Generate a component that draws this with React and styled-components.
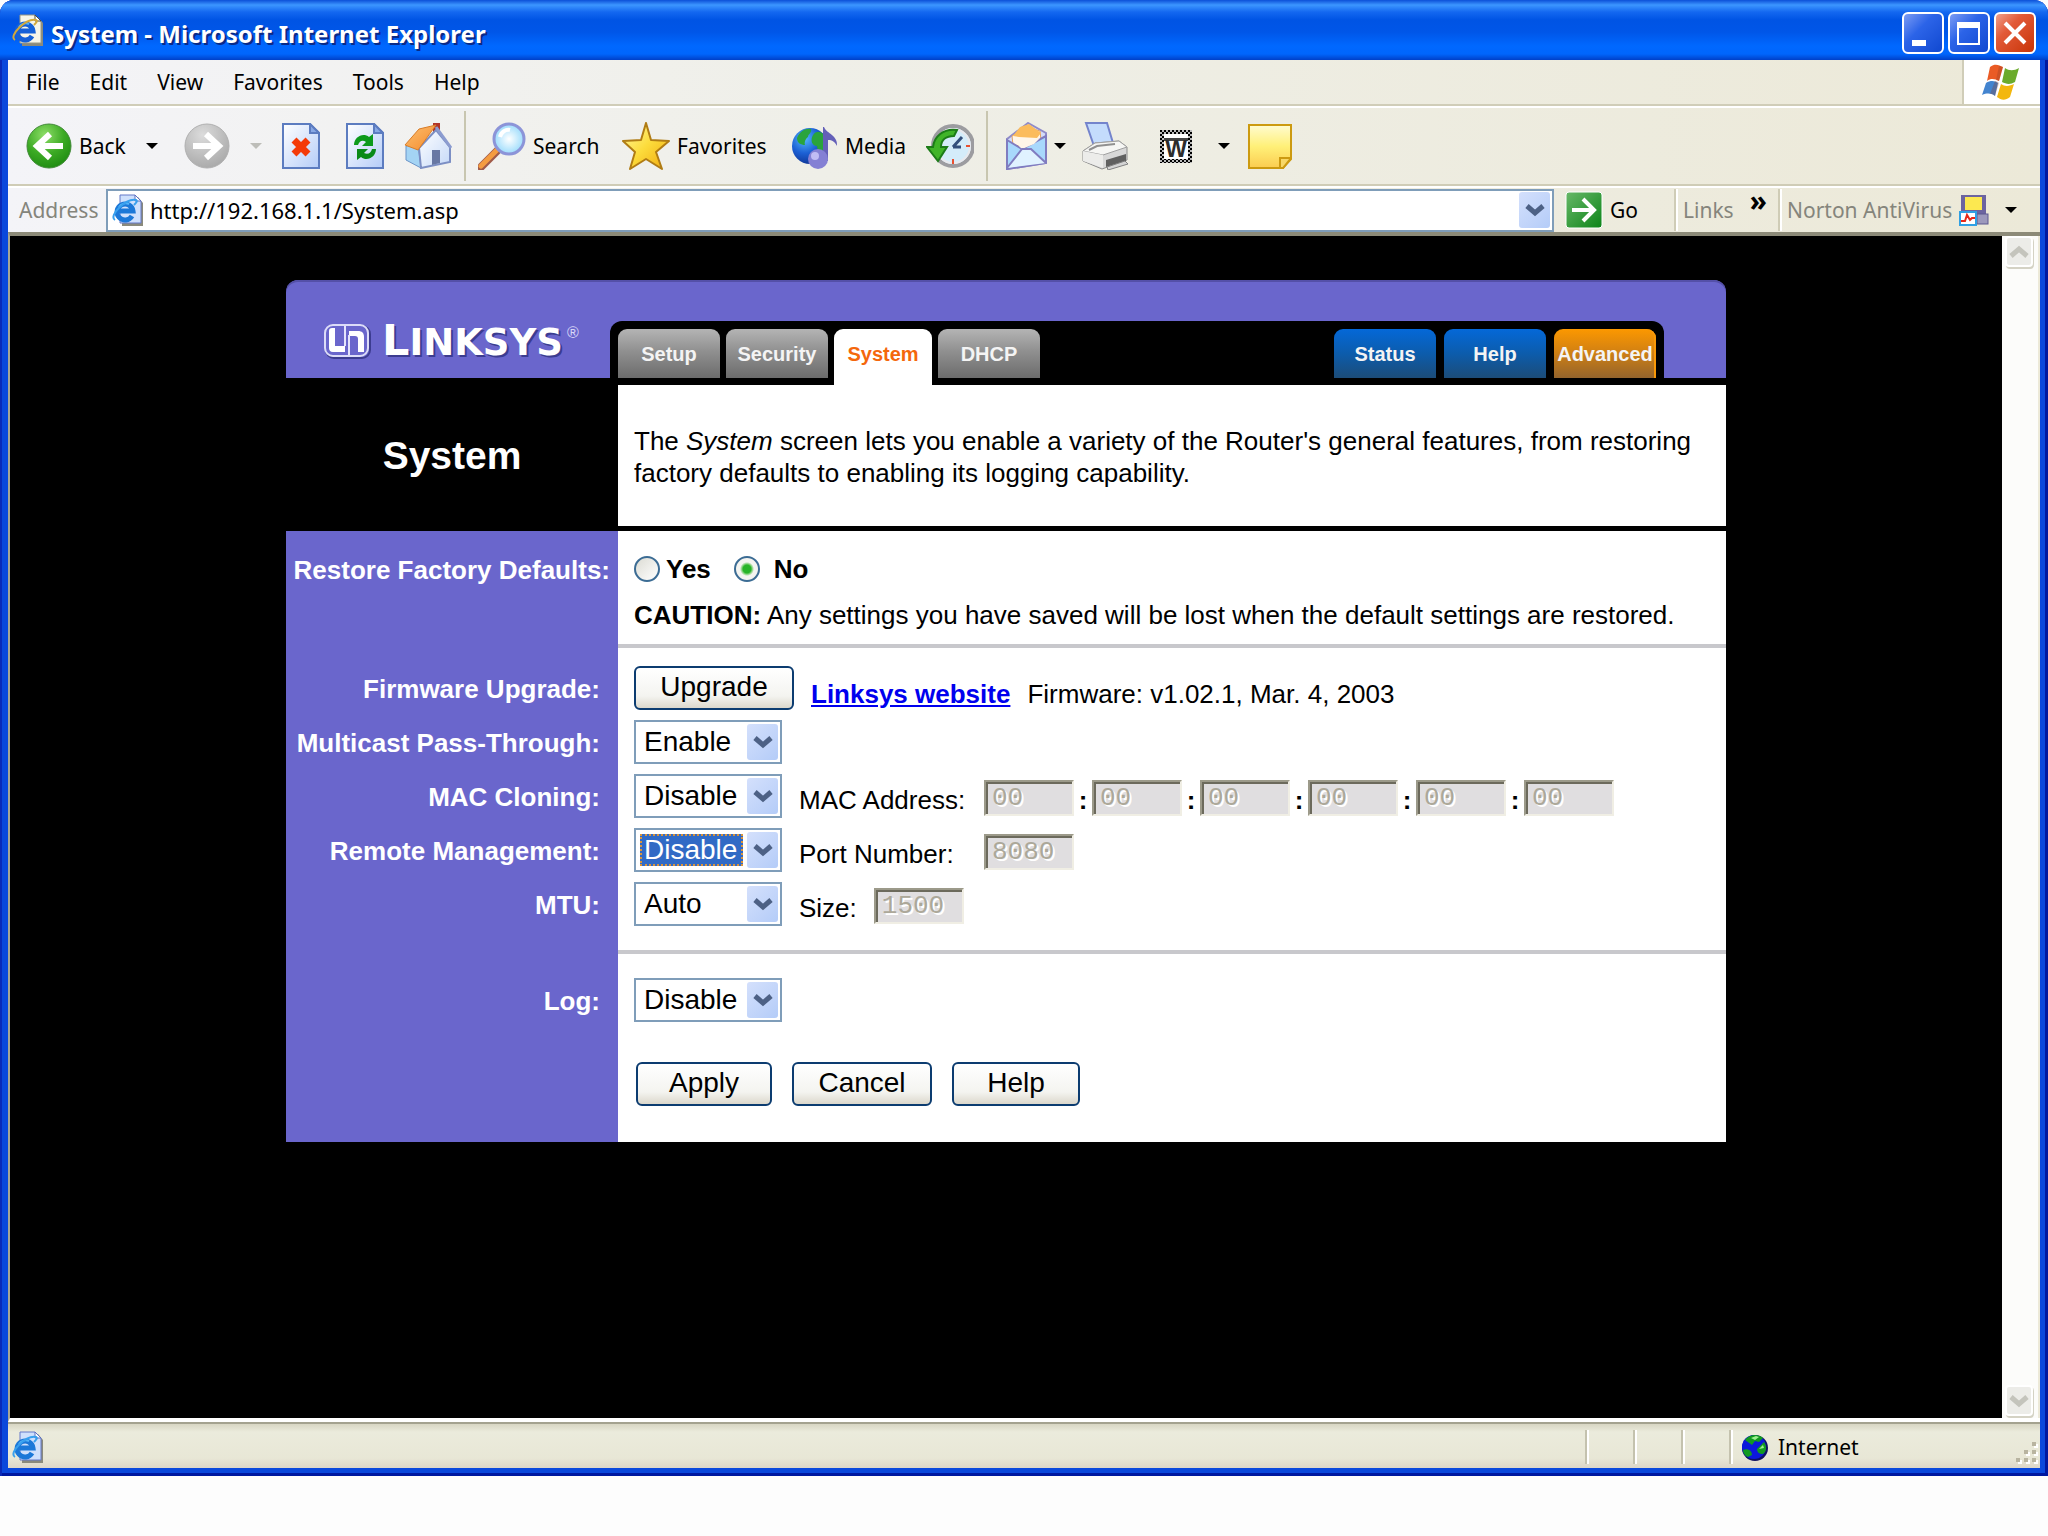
import React, { useState } from 'react'
import styled, { createGlobalStyle, css } from 'styled-components';

const uiFont = `"Noto Sans", "Open Sans", sans-serif`;
const pageFont = `"Liberation Sans", Arial, sans-serif`;

const App = () => {
  return (
    <Screen>
      <GlobalStyle />
      <Window>
        <TitleBar>
          <PageIcon size={32} />
          <Title>System - Microsoft Internet Explorer</Title>
          <WindowButtons />
        </TitleBar>
        <Chrome>
          <MenuBar />
          <ToolBar />
          <AddressBar />
        </Chrome>
        <Viewport>
          <Page>
            <RouterPanel />
          </Page>
          <ScrollBar>
            <ScrollButton aria-label="Scroll up"><Chevron up color="#c4c4bc" /></ScrollButton>
            <ScrollButton aria-label="Scroll down"><Chevron color="#c4c4bc" /></ScrollButton>
          </ScrollBar>
        </Viewport>
        <StatusBar>
          <PageIcon size={32} blue />
          <StatusCells>
            <StatusCell />
            <StatusCell />
            <StatusCell />
            <StatusZone>
              <ZoneIcon />
              Internet
              <Grip />
            </StatusZone>
          </StatusCells>
        </StatusBar>
      </Window>
    </Screen>
  )
}

export default App

const WindowButtons = () => (
  <WindowControls>
    <WindowButton aria-label="Minimize">
      <svg width="36" height="36" viewBox="0 0 36 36"><rect x="7" y="25" width="14" height="6" fill="#fff" /></svg>
    </WindowButton>
    <WindowButton aria-label="Maximize">
      <svg width="36" height="36" viewBox="0 0 36 36"><path d="M6 7h23v23H6z M8 13v15h19V13z" fill="#fff" fillRule="evenodd" /></svg>
    </WindowButton>
    <WindowButton $close aria-label="Close">
      <svg width="36" height="36" viewBox="0 0 36 36"><path d="M8 8l20 20M28 8L8 28" stroke="#fff" strokeWidth="4" /></svg>
    </WindowButton>
  </WindowControls>
);

const MenuBar = () => (
  <Menu>
    {['File', 'Edit', 'View', 'Favorites', 'Tools', 'Help'].map((item) => (
      <MenuItem key={item}>{item}</MenuItem>
    ))}
    <FlagBox><FlagIcon /></FlagBox>
  </Menu>
);

const ToolBar = () => (
  <Tools>
    <ToolButton $width={120}><BackIcon />Back</ToolButton>
    <ToolButton $width={38} aria-label="Back history"><Caret /></ToolButton>
    <ToolButton $width={66} aria-label="Forward"><ForwardIcon /></ToolButton>
    <ToolButton $width={32} aria-label="Forward history"><Caret color="#bdbdb8" /></ToolButton>
    <ToolButton $width={64} aria-label="Stop"><StopIcon /></ToolButton>
    <ToolButton $width={58} aria-label="Refresh"><RefreshIcon /></ToolButton>
    <ToolButton $width={60} aria-label="Home"><HomeIcon /></ToolButton>
    <Separator />
    <ToolButton $width={144}><SearchIcon />Search</ToolButton>
    <ToolButton $width={170}><StarIcon />Favorites</ToolButton>
    <ToolButton $width={134}><MediaIcon />Media</ToolButton>
    <ToolButton $width={60} aria-label="History"><HistoryIcon /></ToolButton>
    <Separator $wide />
    <ToolButton $width={48} aria-label="Mail"><MailIcon /></ToolButton>
    <ToolButton $width={28} aria-label="Mail options"><Caret /></ToolButton>
    <ToolButton $width={78} aria-label="Print"><PrinterIcon /></ToolButton>
    <ToolButton $width={58} aria-label="Edit with Word"><WordIcon /></ToolButton>
    <ToolButton $width={30} aria-label="Edit options"><Caret /></ToolButton>
    <ToolButton $width={44} aria-label="Discuss"><NoteIcon /></ToolButton>
  </Tools>
);

const AddressBar = () => (
  <Address>
    <AddressLabel htmlFor="url">Address</AddressLabel>
    <AddressBox>
      <PageIcon size={32} blue />
      <AddressInput id="url" defaultValue="http://192.168.1.1/System.asp" />
      <ArrowTile><Chevron /></ArrowTile>
    </AddressBox>
    <GoButton><GoIcon />Go</GoButton>
    <BandCell $width={104}>Links <More>»</More></BandCell>
    <BandCell $width={262}>
      Norton AntiVirus
      <NortonTools>
        <NortonIcon />
        <Caret />
      </NortonTools>
    </BandCell>
  </Address>
);

const DropDown = ({ id, options, focused, label }) => {
  const [value, setValue] = useState(options[0]);
  return (
    <SelectBox>
      <Select id={id} aria-label={label} $focused={focused} value={value} onChange={(e) => setValue(e.target.value)}>
        {options.map((option) => <option key={option}>{option}</option>)}
      </Select>
      <ArrowTile><Chevron /></ArrowTile>
    </SelectBox>
  )
};

const RouterPanel = () => {
  const [restore, setRestore] = useState('no');
  return (
    <Panel>
      <PanelHeader>
        <Brand>
          <LogoMark />
          <WordMark><big>L</big>INKSYS</WordMark>
          <Registered>®</Registered>
        </Brand>
        <TabBar>
          <Tab href="#setup">Setup</Tab>
          <Tab href="#security">Security</Tab>
          <Tab href="#system" $kind="active">System</Tab>
          <Tab href="#dhcp">DHCP</Tab>
          <TabsRight>
            <Tab href="#status" $kind="blue">Status</Tab>
            <Tab href="#help" $kind="blue">Help</Tab>
            <Tab href="#advanced" $kind="orange">Advanced</Tab>
          </TabsRight>
        </TabBar>
      </PanelHeader>
      <Intro>
        <Heading>System</Heading>
        <IntroText>
          The <em>System</em> screen lets you enable a variety of the Router's general features, from restoring
          factory defaults to enabling its logging capability.
        </IntroText>
      </Intro>
      <Body>
        <Section $top={16} $bottom={13} $gap={8}>
          <Row role="radiogroup" aria-labelledby="restore">
            <RowLabel as="span" id="restore" $wide>Restore Factory Defaults:</RowLabel>
            <Fields>
              <Choice $gap={6}>
                <Radio type="radio" name="restore" checked={restore === 'yes'} onChange={() => setRestore('yes')} />
                Yes
              </Choice>
              <Choice $gap={14}>
                <Radio type="radio" name="restore" checked={restore === 'no'} onChange={() => setRestore('no')} />
                No
              </Choice>
            </Fields>
          </Row>
          <Caution>
            <b>CAUTION:</b> Any settings you have saved will be lost when the default settings are restored.
          </Caution>
        </Section>
        <Rule />
        <Section $top={18} $bottom={24} $gap={10}>
          <Row>
            <RowLabel htmlFor="upgrade">Firmware Upgrade:</RowLabel>
            <Fields $end>
              <PushButton id="upgrade" $width={160}>Upgrade</PushButton>
              <SiteLink href="#linksys">Linksys website</SiteLink>
              <span>Firmware: v1.02.1, Mar. 4, 2003</span>
            </Fields>
          </Row>
          <Row>
            <RowLabel htmlFor="multicast">Multicast Pass-Through:</RowLabel>
            <Fields><DropDown id="multicast" options={['Enable', 'Disable']} /></Fields>
          </Row>
          <Row>
            <RowLabel htmlFor="cloning">MAC Cloning:</RowLabel>
            <Fields>
              <DropDown id="cloning" options={['Disable', 'Enable']} />
              <Extra>
                <ExtraLabel $fixed htmlFor="mac0">MAC Address:</ExtraLabel>
                <MacGroup>
                  {[0, 1, 2, 3, 4, 5].map((n) => (
                    <React.Fragment key={n}>
                      {n > 0 && <Colon>:</Colon>}
                      <SunkenInput id={`mac${n}`} aria-label={`MAC Address ${n + 1}`} defaultValue="00" disabled />
                    </React.Fragment>
                  ))}
                </MacGroup>
              </Extra>
            </Fields>
          </Row>
          <Row>
            <RowLabel htmlFor="remote">Remote Management:</RowLabel>
            <Fields>
              <DropDown id="remote" options={['Disable', 'Enable']} focused />
              <Extra>
                <ExtraLabel $fixed htmlFor="port">Port Number:</ExtraLabel>
                <SunkenInput id="port" defaultValue="8080" disabled />
              </Extra>
            </Fields>
          </Row>
          <Row>
            <RowLabel htmlFor="mtu">MTU:</RowLabel>
            <Fields>
              <DropDown id="mtu" options={['Auto', 'Manual']} />
              <Extra>
                <ExtraLabel htmlFor="size">Size:</ExtraLabel>
                <SunkenInput id="size" defaultValue="1500" disabled />
              </Extra>
            </Fields>
          </Row>
        </Section>
        <Rule />
        <Section $top={24} $bottom={36} $gap={40}>
          <Row>
            <RowLabel htmlFor="log">Log:</RowLabel>
            <Fields><DropDown id="log" options={['Disable', 'Enable']} /></Fields>
          </Row>
          <Actions>
            <PushButton $width={136}>Apply</PushButton>
            <PushButton $width={140}>Cancel</PushButton>
            <PushButton $width={128}>Help</PushButton>
          </Actions>
        </Section>
      </Body>
    </Panel>
  )
};

/* icons */

const Caret = ({ color = '#000' }) => (
  <svg width="12" height="8" viewBox="0 0 12 8"><path d="M0 1h12L6 7z" fill={color} /></svg>
);

const Chevron = ({ up, color = '#4d6185' }) => (
  <svg width="20" height="14" viewBox="0 0 20 14">
    <path d={up ? 'M2 11l8-7 8 7' : 'M2 3l8 7 8-7'} fill="none" stroke={color} strokeWidth="5" />
  </svg>
);

const PageIcon = ({ size, blue }) => (
  <svg width={size} height={size} viewBox="0 0 32 32">
    <path d="M10 3h16l5 6v23H10z" fill="#8a8a7c" />
    <path d="M8 1h15l6 6v22H8z" fill={blue ? '#cfe0fc' : '#f7f5e8'} stroke={blue ? '#6478c8' : '#9a9884'} />
    <path d="M23 1v6h6z" fill="#fff" stroke={blue ? '#5d70c0' : '#4d4c40'} />
    <path d="M20 22a8 8 0 1 1 1-5H7" fill="none" stroke={blue ? '#1c78d8' : '#1560d8'} strokeWidth="5" />
    <path d="M7 13a8 8 0 0 1 10-3" fill="none" stroke="#54b4f8" strokeWidth="2" />
    <path d="M3 26C-4 22 14 4 24 6c2 1 0 3-2 5" fill="none" stroke={blue ? '#38a0ee' : '#d2a83a'} strokeWidth="2" />
  </svg>
);

const FlagIcon = () => (
  <svg width="40" height="38" viewBox="0 0 40 38">
    <path d="M8 4c5-4 9-2 13 0l-4 14c-4-2-8-3-12 0z" fill="#ea5b25" />
    <path d="M23 5c4 3 9 3 14 0l-4 14c-5 3-9 2-13 0z" fill="#6bab2c" />
    <path d="M4 20c5-3 9-2 12 0l-3 13c-4-3-8-3-13-1z" fill="#4384cf" />
    <path d="M19 21c4 3 9 2 13 0l-4 13c-5 4-9 3-13 0z" fill="#f3b70e" />
    <path d="M13 18c2 0 3 1 4 2l-4 13c-2-2-4-2-5-2zM17 3l4 1-4 14-3-1z" fill="#8a3c28" opacity=".3" />
  </svg>
);

const BackIcon = () => (
  <svg width="46" height="46" viewBox="0 0 46 46">
    <defs>
      <radialGradient id="back" cx=".4" cy=".25" r=".8">
        <stop offset="0" stopColor="#8ede68" /><stop offset=".55" stopColor="#3caa24" /><stop offset="1" stopColor="#1d8a10" />
      </radialGradient>
    </defs>
    <circle cx="23" cy="23" r="22" fill="url(#back)" stroke="#428a38" />
    <path d="M37 23H13M24 11L11 23l13 12" fill="none" stroke="#fff" strokeWidth="6" />
  </svg>
);

const ForwardIcon = () => (
  <svg width="46" height="46" viewBox="0 0 46 46">
    <defs>
      <radialGradient id="fwd" cx=".4" cy=".25" r=".8">
        <stop offset="0" stopColor="#dcdcdc" /><stop offset=".6" stopColor="#bcbcbc" /><stop offset="1" stopColor="#a8a8a8" />
      </radialGradient>
    </defs>
    <circle cx="23" cy="23" r="22" fill="url(#fwd)" stroke="#b0b0b0" />
    <path d="M9 23h24M22 11l13 12-13 12" fill="none" stroke="#fff" strokeWidth="6" />
  </svg>
);

const Sheet = ({ children }) => (
  <svg width="38" height="46" viewBox="0 0 38 46">
    <defs>
      <linearGradient id="sheet" x1="0" y1="0" x2="1" y2="1">
        <stop offset="0" stopColor="#fff" /><stop offset="1" stopColor="#b4ccf8" />
      </linearGradient>
    </defs>
    <path d="M1 1h27l9 9v35H1z" fill="url(#sheet)" stroke="#5c7cc0" strokeWidth="2" />
    <path d="M28 1v9h9z" fill="#88a8e4" stroke="#5c7cc0" strokeWidth="2" />
    {children}
  </svg>
);

const StopIcon = () => (
  <Sheet><path d="M12 17l14 14M26 17L12 31" stroke="#f43a08" strokeWidth="7" /></Sheet>
);

const RefreshIcon = () => (
  <Sheet>
    <path d="M8 22c0-8 9-13 15-8l4-3v12H16l4-4c-4-3-7 0-8 3z" fill="#0c9a1c" />
    <path d="M30 26c0 8-9 13-15 8l-4 3V26h11l-4 4c4 2 7 0 8-4z" fill="#0a8a18" />
  </Sheet>
);

const HomeIcon = () => (
  <svg width="48" height="46" viewBox="0 0 48 46">
    <defs>
      <linearGradient id="roof" x1="0" y1="0" x2="1" y2="1">
        <stop offset="0" stopColor="#fcc070" /><stop offset="1" stopColor="#f48a2c" />
      </linearGradient>
      <linearGradient id="wall" x1="0" y1="0" x2="1" y2="1">
        <stop offset="0" stopColor="#fff" /><stop offset="1" stopColor="#c4d8f8" />
      </linearGradient>
    </defs>
    <path d="M29 0h7v12h-7z" fill="#b03428" />
    <path d="M2 23l12-2 3 24L2 37z" fill="#a4d4f4" stroke="#6a94c8" />
    <path d="M15 25L32 7l14 17v15l-29 6z" fill="url(#wall)" stroke="#7c8fc4" strokeWidth="2" />
    <path d="M1 22L15 6 32 2 14 27z" fill="url(#roof)" stroke="#d87c28" />
    <path d="M32 4l15 21" stroke="#8c9cd0" strokeWidth="3" />
    <path d="M28 27h8v13l-8 2z" fill="#6878a4" />
  </svg>
);

const SearchIcon = () => (
  <svg width="48" height="48" viewBox="0 0 48 48">
    <defs>
      <radialGradient id="lens"><stop offset="0" stopColor="#fff" /><stop offset="1" stopColor="#9cdcfc" /></radialGradient>
    </defs>
    <path d="M3 45l17-17" stroke="#a05a48" strokeWidth="8" strokeLinecap="round" />
    <path d="M3 44l16-16" stroke="#f49c40" strokeWidth="5" strokeLinecap="round" />
    <circle cx="31" cy="17" r="15" fill="url(#lens)" stroke="#8c94d8" strokeWidth="3" />
    <path d="M22 15c1-5 6-8 10-7" fill="none" stroke="#fff" strokeWidth="4" />
  </svg>
);

const StarIcon = () => (
  <svg width="48" height="48" viewBox="0 0 48 48">
    <defs>
      <linearGradient id="star" x1="0" y1="0" x2="1" y2="1">
        <stop offset="0" stopColor="#fff8a0" /><stop offset=".5" stopColor="#fcdc3c" /><stop offset="1" stopColor="#f0a80c" />
      </linearGradient>
    </defs>
    <path d="M24 1l5 17 18 1-13 11 6 17-16-10L8 47l5-17L1 19l18-1z" fill="url(#star)" stroke="#b07c14" strokeWidth="2" strokeLinejoin="round" />
  </svg>
);

const MediaIcon = () => (
  <svg width="46" height="46" viewBox="0 0 46 46">
    <defs>
      <radialGradient id="earth" cx=".35" cy=".3" r=".8">
        <stop offset="0" stopColor="#54b8fc" /><stop offset=".5" stopColor="#1c60d4" /><stop offset="1" stopColor="#0c2c88" />
      </radialGradient>
    </defs>
    <circle cx="18" cy="23" r="18" fill="url(#earth)" />
    <path d="M5 15C8 8 14 5 19 6c1 4-3 5-3 8-2 1-4 5-3 8-4 0-8-2-8-7zM21 12c3-4 7-4 10-1 4 5 5 10 3 16-5 3-9 1-9-4-5 0-7-6-4-11z" fill="#2aa43c" />
    <path d="M32 4c3 7 14 8 13 19-3-6-7-6-9-6v21h-5V4z" fill="#6460b8" />
    <circle cx="26" cy="36" r="10" fill="#8480d4" />
    <circle cx="23" cy="33" r="4" fill="#c0bcf4" />
  </svg>
);

const HistoryIcon = () => (
  <svg width="48" height="46" viewBox="0 0 48 46">
    <circle cx="27" cy="23" r="20" fill="#d4ecfa" stroke="#9c9ca0" strokeWidth="4" />
    <circle cx="27" cy="23" r="17" fill="none" stroke="#e8e8ec" strokeWidth="2" />
    <path d="M27 24l9-10M27 24h8" stroke="#34507c" strokeWidth="3" />
    <path d="M27 36v5M40 23h4" stroke="#e85030" strokeWidth="2" />
    <path d="M31 7C17 5 8 14 7 24H1l11 14 9-14h-6c0-7 5-11 13-11z" fill="#40b428" stroke="#1c7c18" strokeWidth="2" />
  </svg>
);

const MailIcon = () => (
  <svg width="42" height="48" viewBox="0 0 42 48">
    <path d="M1 17L22 1l18 10v30L1 47z" fill="#d4dcf8" stroke="#908cc8" strokeWidth="2" />
    <path d="M7 23L6 14l14-9 14 4 1 9-12 7z" fill="#fff6e8" stroke="#e0a060" />
    <path d="M7 14l7-9 9-3 12 9-4 5-18-1z" fill="#fbbc5c" />
    <path d="M1 18l15 9L40 14v27L1 47z" fill="#a8d8fc" stroke="#807cc0" strokeWidth="2" />
    <path d="M8 19l16 0 10-3-6 6-12 5z" fill="#fff6e8" />
    <path d="M1 46l15-19h9l15 14" fill="#e0f2ff" stroke="#807cc0" strokeWidth="2" />
  </svg>
);

const PrinterIcon = () => (
  <svg width="46" height="48" viewBox="0 0 46 48">
    <path d="M4 1h21l6 20-19 3z" fill="#c4dcfc" stroke="#7484cc" strokeWidth="2" />
    <path d="M1 29l12-8 24-2 8 6v13L20 47 1 39z" fill="#d8d8d8" stroke="#8c8c8c" />
    <path d="M1 29l12-8 24-2 8 6-24 8z" fill="#f6f6f4" stroke="#a0a0a0" />
    <path d="M7 28l8-4 18-2" fill="none" stroke="#909090" strokeWidth="2" />
    <path d="M1 29l20 4v13L1 39z" fill="#ececea" />
    <path d="M24 38l20-6v7l-20 6z" fill="#606060" />
    <path d="M25 45l18-6 3 3-20 6z" fill="#d4d4d4" stroke="#808080" />
  </svg>
);

const WordIcon = () => (
  <svg width="32" height="33" viewBox="0 0 32 33">
    <defs>
      <pattern id="dots" width="4" height="4" patternUnits="userSpaceOnUse">
        <rect width="4" height="4" fill="#bbb" /><rect width="2" height="2" /><rect x="2" y="2" width="2" height="2" />
      </pattern>
    </defs>
    <rect width="32" height="33" fill="url(#dots)" />
    <rect x="4" y="4" width="24" height="25" fill="#fff" />
    <rect x="4" y="8" width="24" height="3" fill="#444" />
    <text x="16" y="27" textAnchor="middle" fontFamily="Liberation Sans" fontWeight="700" fontSize="23" fill="#2c2c2c">W</text>
  </svg>
);

const NoteIcon = () => (
  <svg width="44" height="45" viewBox="0 0 44 45">
    <defs>
      <linearGradient id="note" x1="0" y1="0" x2="0" y2="1">
        <stop offset="0" stopColor="#fffbd0" /><stop offset=".5" stopColor="#fff078" /><stop offset="1" stopColor="#fbcc50" />
      </linearGradient>
    </defs>
    <path d="M1 1h42v34l-8 9H1z" fill="url(#note)" stroke="#cc9a10" strokeWidth="2" />
    <path d="M43 34H32v10h3z" fill="#f8d868" stroke="#cc9a10" strokeWidth="2" />
  </svg>
);

const GoIcon = () => (
  <svg width="38" height="38" viewBox="0 0 38 38">
    <defs>
      <linearGradient id="go" x1="0" y1="0" x2="1" y2="1">
        <stop offset="0" stopColor="#68b868" /><stop offset="1" stopColor="#0c8418" />
      </linearGradient>
    </defs>
    <rect x="1" y="1" width="36" height="36" rx="3" fill="url(#go)" stroke="#fff" />
    <path d="M7 19h21M18 8l11 11-11 11" fill="none" stroke="#fff" strokeWidth="4" />
  </svg>
);

const NortonIcon = () => (
  <svg width="30" height="32" viewBox="0 0 30 32">
    <rect x="2" y="1" width="25" height="20" fill="#6c64a0" />
    <rect x="6" y="3" width="17" height="13" fill="#fce850" />
    <rect x="18" y="20" width="11" height="10" fill="#9c98bc" stroke="#5c5890" />
    <rect x="1" y="18" width="16" height="13" fill="#fff" stroke="#30a0e4" strokeWidth="2" />
    <path d="M2 27h4l2-6 3 5 2-2h3" fill="none" stroke="#e82818" strokeWidth="2" />
  </svg>
);

const ZoneIcon = () => (
  <svg width="26" height="27" viewBox="0 0 26 27">
    <circle cx="13" cy="14" r="13" fill="#101060" />
    <circle cx="12" cy="13" r="12" fill="#0c18dc" />
    <path d="M3 6c4-5 12-7 18-2l-4 4-4-1-3 4zM15 15l7-7c3 4 3 9-1 12-4 0-6-2-6-5zM1 16c4-2 9 0 9 5l-4 2c-3-1-5-4-5-7z" fill="#129a20" />
    <path d="M9 4l5-2 3 1-4 3zM17 15l4-4 1 3z" fill="#9cf090" />
  </svg>
);

const Grip = () => (
  <GripSvg width="22" height="22" viewBox="0 0 22 22">
    {[[16, 0], [8, 8], [16, 8], [0, 16], [8, 16], [16, 16]].map(([x, y]) => (
      <g key={`${x}-${y}`}>
        <rect x={x + 2} y={y + 2} width="4" height="4" fill="#fff" />
        <rect x={x} y={y} width="4" height="4" fill="#b8b4a0" />
      </g>
    ))}
  </GripSvg>
);

const LogoMark = () => (
  <svg width="48" height="36" viewBox="0 0 48 36">
    <rect x="3" y="3" width="44" height="32" rx="8" fill="none" stroke="#3c3c90" strokeWidth="2" />
    <rect x="2" y="2" width="43" height="31" rx="8" fill="#6a66cc" stroke="#dcdcf8" strokeWidth="2" />
    <path d="M6 8c0-2 1-3 3-3h3v18h10v6H10c-3 0-4-2-4-4z" fill="#fff" />
    <path d="M26 8h9c4 0 6 2 6 6v15h-6V16c0-2-1-3-3-3h-6z" fill="#fff" />
    <path d="M22 3v20M26 12v20" stroke="#e4e4fc" strokeWidth="2" />
  </svg>
);

const GlobalStyle = createGlobalStyle`
body{
    margin:0;
    background:#fdfdfd;
}
*{
    box-sizing:border-box;
}
svg{
    display:block;
    flex:none;
}
button{
    font:inherit;
    color:inherit;
}
`;

const Screen = styled.div`
min-height:100vh;
padding-bottom:60px;
display:flex;
flex-direction:column;
`;

const Window = styled.div`
flex:1;
display:flex;
flex-direction:column;
padding:0 8px 8px;
border-radius:14px 14px 0 0;
background:#0a48dc;
box-shadow:inset 2px 0 #0a2ab8, inset -3px -3px #0018a0;
font-family:${uiFont};
font-size:21px;
color:#000;
`;

const TitleBar = styled.header`
height:60px;
margin:0 -8px;
padding:0 12px;
display:flex;
align-items:center;
border-radius:14px 14px 0 0;
background:linear-gradient(#0c50d8 0, #3c96ff 5px, #1468f0 12px, #0054e4 20px, #0056e8 32px, #0068ff 46px, #0066fc 54px, #0040c8 60px);
`;

const Title = styled.h1`
margin:0 0 0 7px;
padding-top:6px;
font-size:24px;
font-weight:700;
color:#fff;
text-shadow:2px 2px #0a2a88;
`;

const WindowControls = styled.div`
display:flex;
gap:4px;
margin-left:auto;
padding-top:6px;
`;

const WindowButton = styled.button`
width:42px;
height:42px;
padding:0;
display:grid;
place-items:center;
border:2px solid #fff;
border-radius:6px;
background:${(props) => props.$close
    ? 'linear-gradient(135deg,#f0a08c,#e25a38 35%,#c83408)'
    : 'linear-gradient(135deg,#7c9cf4,#2c64e8 40%,#1048d0)'};
`;

const Chrome = styled.div`
background:linear-gradient(to right,#f4f4f8,#efefe8 40%,#ece9d8);
`;

const Menu = styled.nav`
height:46px;
display:flex;
align-items:center;
gap:30px;
padding-left:18px;
border-bottom:2px solid #d0cdb8;
`;

const MenuItem = styled.button`
padding:0;
border:0;
background:none;
`;

const FlagBox = styled.div`
align-self:stretch;
width:78px;
margin-left:auto;
display:grid;
place-items:center;
background:#fff;
border-left:2px solid #d0cdb8;
`;

const Tools = styled.div`
height:80px;
display:flex;
align-items:center;
padding-left:18px;
border-top:2px solid #fff;
border-bottom:2px solid #cfccb6;
`;

const ToolButton = styled.button`
width:${(props) => props.$width}px;
padding:0;
display:flex;
align-items:center;
gap:7px;
border:0;
background:none;
white-space:nowrap;
`;

const Separator = styled.span`
width:2px;
height:70px;
margin:0 ${(props) => (props.$wide ? 18 : 12)}px 0 0;
background:#c8c6b0;
`;

const Address = styled.div`
height:46px;
display:flex;
align-items:center;
border-top:2px solid #fff;
`;

const AddressLabel = styled.label`
width:98px;
padding-left:11px;
color:#85857c;
`;

const AddressBox = styled.div`
flex:1;
height:43px;
display:flex;
align-items:center;
gap:6px;
padding:2px 2px 2px 4px;
background:#fff;
border:2px solid #7f9db9;
`;

const AddressInput = styled.input`
flex:1;
min-width:0;
padding:0;
border:0;
outline:0;
font-family:inherit;
font-size:22px;
color:#000;
background:none;
`;

const ArrowTile = styled.span`
width:31px;
height:36px;
flex:none;
display:grid;
place-items:center;
border-radius:3px;
background:linear-gradient(135deg,#d4e0fc,#b4ccf8);
pointer-events:none;
`;

const GoButton = styled.button`
width:120px;
padding:0 0 0 11px;
display:flex;
align-items:center;
gap:7px;
border:0;
background:none;
`;

const BandCell = styled.div`
width:${(props) => props.$width}px;
height:42px;
display:flex;
align-items:center;
justify-content:space-between;
padding:0 11px 0 7px;
border-left:2px solid #cfccb6;
box-shadow:inset 2px 0 #fff;
color:#85857c;
white-space:nowrap;
`;

const More = styled.b`
align-self:flex-start;
font-size:28px;
line-height:22px;
color:#000;
`;

const NortonTools = styled.span`
display:flex;
align-items:center;
gap:16px;
padding-right:12px;
`;

const Viewport = styled.div`
flex:1;
display:flex;
background:#fff;
border-top:4px solid #8c8a78;
border-bottom:4px solid #fff;
border-left:2px solid #a8a694;
`;

const Page = styled.main`
flex:1;
background:#000;
padding:44px 0;
font-family:${pageFont};
font-size:26px;
line-height:32px;
`;

const ScrollBar = styled.div`
width:38px;
display:flex;
flex-direction:column;
justify-content:space-between;
padding:0 5px 2px 3px;
background:#fcfcfa;
border-right:2px solid #ece9d8;
`;

const ScrollButton = styled.button`
height:31px;
padding:0;
display:grid;
place-items:center;
border:2px solid #fff;
border-radius:4px;
background:#ecece8;
box-shadow:1px 2px #d4d2c4;
`;

const StatusBar = styled.footer`
height:46px;
display:flex;
align-items:center;
padding:2px 0 0 4px;
border-top:2px solid #a4a290;
background:linear-gradient(#d8d6c4,#ebebdc 8px,#e8e7d6 34px,#ddd6c8);
`;

const StatusCells = styled.div`
display:flex;
margin-left:auto;
height:34px;
`;

const StatusCell = styled.span`
width:48px;
border-left:2px solid #c4c2ae;
box-shadow:inset 2px 0 #fff;
`;

const StatusZone = styled.div`
width:311px;
display:flex;
align-items:center;
gap:10px;
padding-left:11px;
border-left:2px solid #c4c2ae;
box-shadow:inset 2px 0 #fff;
`;

const GripSvg = styled.svg`
align-self:flex-end;
margin:0 2px 0 auto;
`;

/* router page */

const Panel = styled.div`
max-width:1440px;
margin:0 auto;
`;

const PanelHeader = styled.div`
height:98px;
display:flex;
align-items:flex-end;
background:#6a66cc;
border-radius:12px 12px 0 0;
box-shadow:inset 0 2px #5450a8;
`;

const Brand = styled.div`
width:324px;
height:77px;
display:flex;
align-items:flex-start;
padding:22px 0 0 37px;
color:#fff;
`;

const WordMark = styled.span`
margin-left:11px;
font-family:"DejaVu Sans", sans-serif;
font-size:37px;
font-weight:700;
line-height:34px;
text-shadow:2px 2px #3c3c90;

    big{
        font-size:43px;
    }
`;

const Registered = styled.span`
font-size:16px;
line-height:20px;
margin-left:4px;
color:#d8d8f8;
`;

const TabBar = styled.nav`
flex:1;
height:57px;
margin-right:62px;
padding:8px 8px 0;
display:flex;
gap:6px;
background:#000;
border-radius:12px 12px 0 0;
`;

const TabsRight = styled.div`
display:flex;
gap:8px;
margin-left:auto;
`;

const tabKinds = {
  blue: css`
    background:linear-gradient(#0468d8,#0c5cac 50%,#1c4c78);
  `,
  orange: css`
    background:linear-gradient(#fc9800,#d88410 40%,#94642c);
    box-shadow:inset -2px 0 #f89808;
  `,
  active: css`
    width:98px;
    height:56px;
    padding-bottom:7px;
    color:#f4670c;
    background:#fff;
  `,
};

const Tab = styled.a`
width:102px;
height:49px;
display:grid;
place-items:center;
border-radius:9px 9px 0 0;
font-size:20px;
font-weight:700;
color:#f4f4f4;
text-decoration:none;
background:linear-gradient(#b4b4b4,#909090 45%,#6c6c6c);
${(props) => tabKinds[props.$kind]}
`;

const Intro = styled.div`
display:grid;
grid-template-columns:332px 1fr;
margin-top:7px;
background:#000;
`;

const Heading = styled.h2`
margin:0;
align-self:center;
text-align:center;
font-size:39px;
line-height:44px;
color:#fff;
`;

const IntroText = styled.p`
margin:0;
padding:40px 16px 37px;
background:#fff;
`;

const Body = styled.div`
margin-top:5px;
background:linear-gradient(to right,#6a66cc 332px,#fff 332px);
`;

const Section = styled.section`
display:flex;
flex-direction:column;
gap:${(props) => props.$gap}px;
padding:${(props) => props.$top}px 0 ${(props) => props.$bottom}px;
`;

const Rule = styled.hr`
height:4px;
margin:0 0 0 332px;
border:0;
background:#c8c8cc;
`;

const Row = styled.div`
min-height:44px;
display:flex;
align-items:center;
`;

const RowLabel = styled.label`
width:332px;
flex:none;
padding-top:2px;
padding-right:${(props) => (props.$wide ? 8 : 18)}px;
text-align:right;
font-weight:700;
color:#fff;
`;

const Fields = styled.div`
flex:1;
display:flex;
align-items:${(props) => (props.$end ? 'flex-end' : 'center')};
gap:17px;
padding-left:16px;
`;

const Choice = styled.label`
display:flex;
align-items:center;
gap:${(props) => props.$gap}px;
margin-right:6px;
font-weight:700;
`;

const Radio = styled.input`
appearance:none;
width:26px;
height:26px;
margin:0;
border:2px solid #3c6c94;
border-radius:50%;
background:${(props) => (props.checked
    ? 'radial-gradient(circle,#28b428 0 4px,#74cc6c 5px,#f4f4f0 7px)'
    : 'linear-gradient(135deg,#dcdcd4,#fff)')};
`;

const Caution = styled.p`
margin:0 0 0 332px;
padding-left:16px;
`;

const PushButton = styled.button`
width:${(props) => props.$width}px;
height:44px;
padding:0 0 2px;
font-size:28px;
line-height:34px;
border:2px solid #0c3c70;
border-radius:6px;
background:linear-gradient(#fff,#f4f4f0 70%,#dcd8cc);
`;

const SiteLink = styled.a`
font-weight:700;
color:#0000ee;
`;

const SelectBox = styled.div`
width:148px;
height:44px;
display:flex;
align-items:center;
gap:4px;
padding:0 2px 0 4px;
background:#fff;
border:2px solid #7f9db9;
`;

const Select = styled.select`
appearance:none;
flex:1;
min-width:0;
height:32px;
padding:0 0 0 4px;
border:0;
border-radius:0;
outline:0;
font-family:inherit;
font-size:28px;
line-height:32px;
color:#000;
background:#fff;
${(props) => props.$focused && css`
    color:#fff;
    background:#316ac5;
    outline:2px dotted #d8943c;
    outline-offset:-2px;
`}
`;

const Extra = styled.div`
display:flex;
align-items:center;
gap:17px;
padding-top:4px;
`;

const ExtraLabel = styled.label`
width:${(props) => (props.$fixed ? '168px' : 'auto')};
padding-top:4px;
white-space:nowrap;
`;

const MacGroup = styled.div`
display:flex;
align-items:center;
`;

const Colon = styled.b`
width:18px;
padding-top:4px;
text-align:center;
`;

const SunkenInput = styled.input`
width:90px;
height:36px;
padding:0 0 0 6px;
border:2px solid;
border-color:#9c9a8a #f0eee4 #f0eee4 #9c9a8a;
box-shadow:inset 2px 2px #6c6a5c;
background:#e0dee0;
font-family:"Liberation Mono", monospace;
font-size:26px;
color:#aca899;
text-shadow:2px 2px #fff;
`;

const Actions = styled.div`
display:flex;
gap:20px;
padding-left:350px;
`;
